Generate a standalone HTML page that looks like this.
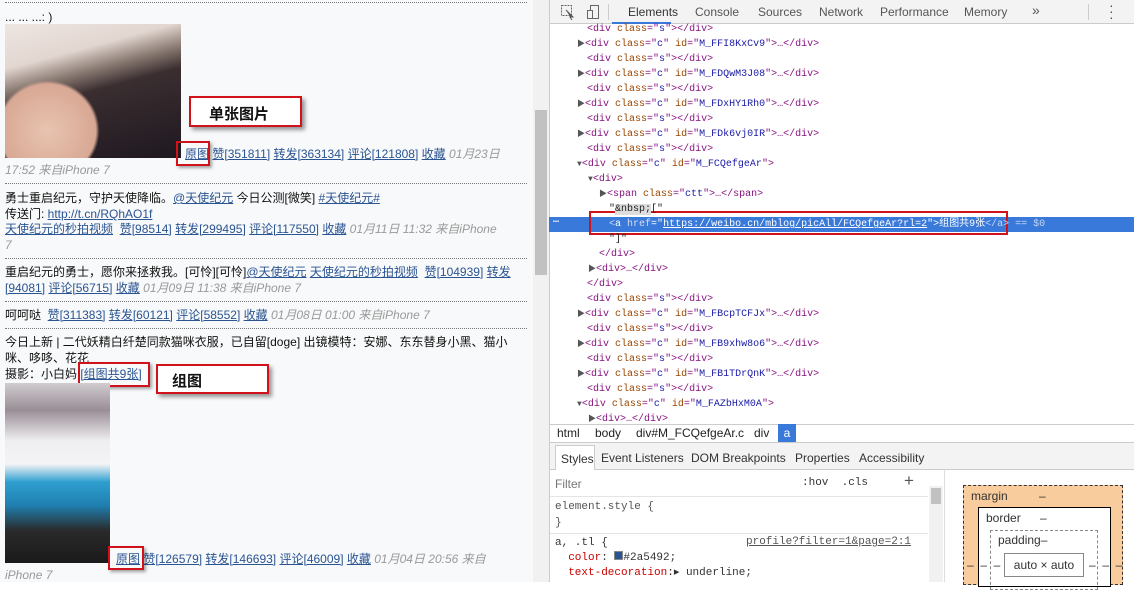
<!DOCTYPE html>
<html><head><meta charset="utf-8"><style>
*{margin:0;padding:0;box-sizing:border-box}
body{width:1134px;height:582px;overflow:hidden;position:relative;background:#fff;font-family:"Liberation Sans","Noto Sans CJK SC",sans-serif}
.a{position:absolute;white-space:nowrap}
#L{position:absolute;left:0;top:0;width:533px;height:582px;background:#f8f9fa;font-size:12px;color:#111}
#L .t{position:absolute;left:5px;white-space:nowrap;line-height:16px}
a{color:#2a5492;text-decoration:underline}
.g{color:#999;font-style:italic}
.hr{position:absolute;left:5px;width:522px;border-top:1px dotted #777}
.rb{position:absolute;border:2px solid #d0121b;box-shadow:2px 2px 3px rgba(0,0,0,.35)}
.lb{position:absolute;border:2px solid #d0121b;background:#fff;box-shadow:3px 3px 4px rgba(0,0,0,.4);font-weight:bold;font-size:15px;font-family:"Noto Sans CJK SC",sans-serif}
#D{position:absolute;left:549px;top:0;width:585px;height:582px;background:#fff;border-left:1px solid #ccc}
.m{font-family:"Liberation Mono","Noto Sans CJK SC",monospace;font-size:10px}
.s11{font-size:11px}
.tr{position:absolute;white-space:nowrap;line-height:15px;height:15px}
.tg{color:#881280}.an{color:#994500}.av{color:#1a1aa6}
.tri{font-size:8px;color:#555}
</style></head><body>
<div id="L">
<div class="hr" style="top:2px"></div>
<div class="t" style="top:9px">... ... ...: )</div>
<div class="a" style="left:5px;top:24px;width:176px;height:134px;background:linear-gradient(165deg,#eee6e2 0%,#e2d6d0 25%,#8a7a72 38%,#3a2e30 50%,#1e1820 100%)"></div>
<div class="a" style="left:5px;top:80px;width:95px;height:78px;background:radial-gradient(ellipse at 45% 65%,#e8c4b0,#d8a894 65%,rgba(0,0,0,0) 70%)"></div>
<div class="lb" style="left:189px;top:96px;width:113px;height:31px;padding:5px 0 0 18px">单张图片</div>
<div class="t" style="left:185px;top:146px"><a>原图</a> <a>赞[351811]</a> <a>转发[363134]</a> <a>评论[121808]</a> <a>收藏</a> <span class="g">01月23日</span></div>
<div class="rb" style="left:176px;top:141px;width:34px;height:25px"></div>
<div class="t g" style="top:162px">17:52 来自iPhone 7</div>
<div class="hr" style="top:183px"></div>
<div class="t" style="top:190px">勇士重启纪元，守护天使降临。<a>@天使纪元</a> 今日公测[微笑] <a>#天使纪元#</a></div>
<div class="t" style="top:206px">传送门: <a>http://t.cn/RQhAO1f</a></div>
<div class="t" style="top:221px"><a>天使纪元的秒拍视频</a> &nbsp;<a>赞[98514]</a> <a>转发[299495]</a> <a>评论[117550]</a> <a>收藏</a> <span class="g">01月11日 11:32 来自iPhone</span></div>
<div class="t g" style="top:237px">7</div>
<div class="hr" style="top:258px"></div>
<div class="t" style="top:264px">重启纪元的勇士，愿你来拯救我。[可怜][可怜]<a>@天使纪元</a> <a>天使纪元的秒拍视频</a> &nbsp;<a>赞[104939]</a> <a>转发</a></div>
<div class="t" style="top:280px"><a>[94081]</a> <a>评论[56715]</a> <a>收藏</a> <span class="g">01月09日 11:38 来自iPhone 7</span></div>
<div class="hr" style="top:301px"></div>
<div class="t" style="top:307px">呵呵哒 &nbsp;<a>赞[311383]</a> <a>转发[60121]</a> <a>评论[58552]</a> <a>收藏</a> <span class="g">01月08日 01:00 来自iPhone 7</span></div>
<div class="hr" style="top:328px"></div>
<div class="t" style="top:334px">今日上新 | 二代妖精白纤楚同款猫咪衣服，已自留[doge] 出镜模特：安娜、东东替身小黑、猫小</div>
<div class="t" style="top:350px">咪、哆哆、花花</div>
<div class="t" style="top:366px">摄影：小白妈 <a>[组图共9张]</a></div>
<div class="rb" style="left:78px;top:362px;width:72px;height:25px"></div>
<div class="lb" style="left:156px;top:364px;width:113px;height:30px;padding:4px 0 0 14px">组图</div>
<div class="a" style="left:5px;top:383px;width:105px;height:180px;background:linear-gradient(180deg,#d0ccd0 0%,#9a8e96 15%,#eeeef0 32%,#f4f4f6 45%,#2f9fd0 55%,#1f7fb0 68%,#2a2a2a 82%,#1a1a1a 100%)"></div>
<div class="t" style="left:116px;top:551px"><a>原图</a> <a>赞[126579]</a> <a>转发[146693]</a> <a>评论[46009]</a> <a>收藏</a> <span class="g">01月04日 20:56 来自</span></div>
<div class="rb" style="left:108px;top:546px;width:36px;height:24px"></div>
<div class="t g" style="top:567px">iPhone 7</div>
</div>
<div class="a" style="left:533px;top:0;width:16px;height:582px;background:#f1f1f1"></div>
<div class="a" style="left:535px;top:110px;width:12px;height:165px;background:#c1c1c1"></div>
<div id="D">
<div class="a" style="left:0;top:0;width:585px;height:24px;background:#f3f3f3;border-bottom:1px solid #ccc;font-size:12px;color:#333"></div>
<svg class="a" style="left:10px;top:4px" width="40" height="16"><rect x="1.5" y="1.5" width="10" height="10" fill="none" stroke="#666" stroke-dasharray="2 1"/><path d="M6 6 L13 13 L10 13 L12 16" stroke="#555" fill="#555"/><rect x="30.5" y="1.5" width="8" height="13" fill="none" stroke="#666"/><rect x="27.5" y="6.5" width="5" height="8" fill="#f3f3f3" stroke="#666"/></svg>
<div class="a" style="left:58px;top:4px;width:1px;height:16px;background:#ccc"></div>
<div class="a" style="left:62px;top:22px;width:59px;height:2px;background:#3879d9"></div>
<div class="a" style="top:5px;left:78px;font-size:12px;color:#333">Elements</div>
<div class="a" style="top:5px;left:145px;font-size:12px;color:#555">Console</div>
<div class="a" style="top:5px;left:208px;font-size:12px;color:#555">Sources</div>
<div class="a" style="top:5px;left:269px;font-size:12px;color:#555">Network</div>
<div class="a" style="top:5px;left:330px;font-size:12px;color:#555">Performance</div>
<div class="a" style="top:5px;left:414px;font-size:12px;color:#555">Memory</div>
<div class="a" style="top:2px;left:482px;font-size:14px;color:#555">»</div>
<div class="a" style="left:538px;top:4px;width:1px;height:16px;background:#ccc"></div>
<div class="a" style="top:2px;left:559px;font-size:14px;color:#555;line-height:6px">·<br>·<br>·</div>
<div class="a" style="left:0;top:424px;width:585px;height:1px;background:#ccc"></div>
<div class="a" style="left:0;top:424px;width:585px;height:18px;font-size:12px;color:#222">
<span class="a" style="left:7px;top:2px">html</span><span class="a" style="left:45px;top:2px">body</span><span class="a" style="left:86px;top:2px">div#M_FCQefgeAr.c</span><span class="a" style="left:204px;top:2px">div</span><span class="a" style="left:228px;top:0;width:18px;height:18px;background:#3879d9;color:#fff;text-align:center;line-height:18px">a</span></div>
<div class="a" style="left:0;top:442px;width:585px;height:1px;background:#ccc"></div>
<div class="a" style="left:0;top:443px;width:585px;height:27px;background:#f3f3f3;border-bottom:1px solid #ccc;font-size:12px;color:#333">
<span class="a" style="left:5px;top:2px;width:40px;height:25px;background:#fff;border:1px solid #ccc;border-bottom:none;padding:6px 0 0 5px">Styles</span>
<span class="a" style="left:51px;top:8px">Event Listeners</span><span class="a" style="left:141px;top:8px">DOM Breakpoints</span><span class="a" style="left:245px;top:8px">Properties</span><span class="a" style="left:309px;top:8px">Accessibility</span></div>
<div class="a" style="left:5px;top:477px;font-size:12px;color:#777">Filter</div>
<div class="a m s11" style="left:252px;top:477px;color:#333">:hov &nbsp;.cls</div>
<div class="a" style="left:354px;top:471px;font-size:17px;color:#555">+</div>
<div class="a" style="left:0;top:496px;width:378px;height:1px;background:#e4e4e4"></div>
<div class="a m s11" style="left:5px;top:499px;color:#555;line-height:16px">element.style {<br>}</div>
<div class="a" style="left:0;top:533px;width:378px;height:1px;background:#e4e4e4"></div>
<div class="a m s11" style="left:5px;top:536px;color:#333;line-height:15px">a, .tl {<br>&nbsp;&nbsp;<span style="color:#c80000">color</span>: <span style="display:inline-block;width:9px;height:9px;background:#2a5492;border:1px solid #888"></span>#2a5492;<br>&nbsp;&nbsp;<span style="color:#c80000">text-decoration</span>:▸ underline;</div>
<div class="a m s11" style="left:196px;top:536px;color:#555;text-decoration:underline">profile?filter=1&amp;page=2:1</div>
<div class="a" style="left:379px;top:486px;width:14px;height:96px;background:#f1f1f1"></div>
<div class="a" style="left:381px;top:488px;width:10px;height:16px;background:#c1c1c1"></div>
<div class="a" style="left:394px;top:470px;width:1px;height:112px;background:#ddd"></div>
<div class="a" style="left:413px;top:485px;width:160px;height:100px;background:#f9cc9d;border:1px dashed #333;font-size:12px;color:#333"><span class="a" style="left:7px;top:3px">margin</span><span class="a" style="left:75px;top:3px">–</span></div>
<div class="a" style="left:428px;top:507px;width:133px;height:80px;background:#fff;border:1px solid #000;font-size:12px;color:#333"><span class="a" style="left:7px;top:3px">border</span><span class="a" style="left:61px;top:3px">–</span></div>
<div class="a" style="left:440px;top:530px;width:108px;height:60px;border:1px dashed #888;font-size:12px;color:#333"><span class="a" style="left:7px;top:2px">padding–</span></div>
<div class="a" style="left:454px;top:553px;width:80px;height:24px;border:1px solid #888;font-size:12px;color:#333;text-align:center;line-height:22px">auto × auto</div>
<div class="a" style="left:417px;top:558px;font-size:12px;color:#333">– &nbsp;– &nbsp;–</div>
<div class="a" style="left:539px;top:558px;font-size:12px;color:#333">– &nbsp;– &nbsp;–</div>
</div>
<div class="a m" style="left:549px;top:22px;width:585px;height:400px;overflow:hidden">
<div class="a" style="left:0;top:195px;width:585px;height:15px;background:#3879d9"></div>
<div class="a" style="left:4px;top:193px;color:#fff;font-weight:bold">…</div>
<div class="rb" style="left:40px;top:189px;width:419px;height:24px;box-shadow:none"></div>
<div class="tr" style="top:0;left:38px"><span class="tg">&lt;div </span><span class="an">class</span><span class="tg">="</span><span class="av">s</span><span class="tg">"&gt;&lt;/div&gt;</span></div>
<div class="tr" style="top:15px;left:28px"><span class="tri">▶</span><span class="tg">&lt;div </span><span class="an">class</span><span class="tg">="</span><span class="av">c</span><span class="tg">" </span><span class="an">id</span><span class="tg">="</span><span class="av">M_FFI8KxCv9</span><span class="tg">"&gt;…&lt;/div&gt;</span></div>
<div class="tr" style="top:30px;left:38px"><span class="tg">&lt;div </span><span class="an">class</span><span class="tg">="</span><span class="av">s</span><span class="tg">"&gt;&lt;/div&gt;</span></div>
<div class="tr" style="top:45px;left:28px"><span class="tri">▶</span><span class="tg">&lt;div </span><span class="an">class</span><span class="tg">="</span><span class="av">c</span><span class="tg">" </span><span class="an">id</span><span class="tg">="</span><span class="av">M_FDQwM3J08</span><span class="tg">"&gt;…&lt;/div&gt;</span></div>
<div class="tr" style="top:60px;left:38px"><span class="tg">&lt;div </span><span class="an">class</span><span class="tg">="</span><span class="av">s</span><span class="tg">"&gt;&lt;/div&gt;</span></div>
<div class="tr" style="top:75px;left:28px"><span class="tri">▶</span><span class="tg">&lt;div </span><span class="an">class</span><span class="tg">="</span><span class="av">c</span><span class="tg">" </span><span class="an">id</span><span class="tg">="</span><span class="av">M_FDxHY1Rh0</span><span class="tg">"&gt;…&lt;/div&gt;</span></div>
<div class="tr" style="top:90px;left:38px"><span class="tg">&lt;div </span><span class="an">class</span><span class="tg">="</span><span class="av">s</span><span class="tg">"&gt;&lt;/div&gt;</span></div>
<div class="tr" style="top:105px;left:28px"><span class="tri">▶</span><span class="tg">&lt;div </span><span class="an">class</span><span class="tg">="</span><span class="av">c</span><span class="tg">" </span><span class="an">id</span><span class="tg">="</span><span class="av">M_FDk6vj0IR</span><span class="tg">"&gt;…&lt;/div&gt;</span></div>
<div class="tr" style="top:120px;left:38px"><span class="tg">&lt;div </span><span class="an">class</span><span class="tg">="</span><span class="av">s</span><span class="tg">"&gt;&lt;/div&gt;</span></div>
<div class="tr" style="top:135px;left:28px"><span class="tri">▼</span><span class="tg">&lt;div </span><span class="an">class</span><span class="tg">="</span><span class="av">c</span><span class="tg">" </span><span class="an">id</span><span class="tg">="</span><span class="av">M_FCQefgeAr</span><span class="tg">"&gt;</span></div>
<div class="tr" style="top:150px;left:39px"><span class="tri">▼</span><span class="tg">&lt;div&gt;</span></div>
<div class="tr" style="top:165px;left:50px"><span class="tri">▶</span><span class="tg">&lt;span </span><span class="an">class</span><span class="tg">="</span><span class="av">ctt</span><span class="tg">"&gt;…&lt;/span&gt;</span></div>
<div class="tr" style="top:180px;left:60px;color:#222">"<span style="background:#ddd">&amp;nbsp;</span>["</div>
<div class="tr" style="top:195px;left:60px;color:#fff"><span style="color:#c8d8f4">&lt;</span>a <span style="color:#dde">href</span>="<span style="text-decoration:underline">https://weibo.cn/mblog/picAll/FCQefgeAr?rl=2</span>"&gt;组图共9张<span style="color:#c8d8f4">&lt;/a&gt; == $0</span></div>
<div class="tr" style="top:210px;left:60px;color:#222">"]"</div>
<div class="tr" style="top:225px;left:50px"><span class="tg">&lt;/div&gt;</span></div>
<div class="tr" style="top:240px;left:39px"><span class="tri">▶</span><span class="tg">&lt;div&gt;…&lt;/div&gt;</span></div>
<div class="tr" style="top:255px;left:38px"><span class="tg">&lt;/div&gt;</span></div>
<div class="tr" style="top:270px;left:38px"><span class="tg">&lt;div </span><span class="an">class</span><span class="tg">="</span><span class="av">s</span><span class="tg">"&gt;&lt;/div&gt;</span></div>
<div class="tr" style="top:285px;left:28px"><span class="tri">▶</span><span class="tg">&lt;div </span><span class="an">class</span><span class="tg">="</span><span class="av">c</span><span class="tg">" </span><span class="an">id</span><span class="tg">="</span><span class="av">M_FBcpTCFJx</span><span class="tg">"&gt;…&lt;/div&gt;</span></div>
<div class="tr" style="top:300px;left:38px"><span class="tg">&lt;div </span><span class="an">class</span><span class="tg">="</span><span class="av">s</span><span class="tg">"&gt;&lt;/div&gt;</span></div>
<div class="tr" style="top:315px;left:28px"><span class="tri">▶</span><span class="tg">&lt;div </span><span class="an">class</span><span class="tg">="</span><span class="av">c</span><span class="tg">" </span><span class="an">id</span><span class="tg">="</span><span class="av">M_FB9xhw8o6</span><span class="tg">"&gt;…&lt;/div&gt;</span></div>
<div class="tr" style="top:330px;left:38px"><span class="tg">&lt;div </span><span class="an">class</span><span class="tg">="</span><span class="av">s</span><span class="tg">"&gt;&lt;/div&gt;</span></div>
<div class="tr" style="top:345px;left:28px"><span class="tri">▶</span><span class="tg">&lt;div </span><span class="an">class</span><span class="tg">="</span><span class="av">c</span><span class="tg">" </span><span class="an">id</span><span class="tg">="</span><span class="av">M_FB1TDrQnK</span><span class="tg">"&gt;…&lt;/div&gt;</span></div>
<div class="tr" style="top:360px;left:38px"><span class="tg">&lt;div </span><span class="an">class</span><span class="tg">="</span><span class="av">s</span><span class="tg">"&gt;&lt;/div&gt;</span></div>
<div class="tr" style="top:375px;left:28px"><span class="tri">▼</span><span class="tg">&lt;div </span><span class="an">class</span><span class="tg">="</span><span class="av">c</span><span class="tg">" </span><span class="an">id</span><span class="tg">="</span><span class="av">M_FAZbHxM0A</span><span class="tg">"&gt;</span></div>
<div class="tr" style="top:390px;left:39px;height:11px;overflow:hidden"><span class="tri">▶</span><span class="tg">&lt;div&gt;…&lt;/div&gt;</span></div>
</div>
</body></html>
